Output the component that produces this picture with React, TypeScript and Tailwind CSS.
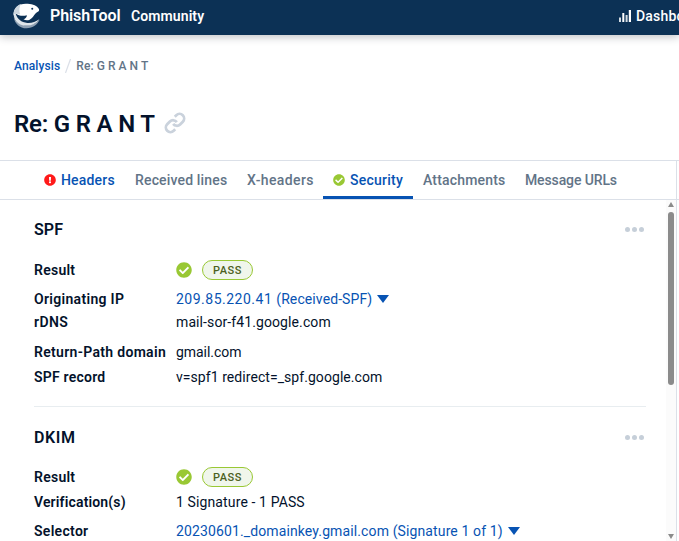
import type { ReactNode } from "react";
import { Link } from "lucide-react";
import { FaCheckCircle, FaExclamationCircle } from "react-icons/fa";

function Logo() {
  return (
    <svg viewBox="40 4 80 80" className="mt-px h-[27px] w-[27px] shrink-0">
      <path d="M42 46c3 19 18 33 38 33 19 0 33-11 39-26-9 10-22 17-38 17-18 0-33-9-39-24Z" fill="#8d9fb2" />
      <path d="M42 34c-1 20 13 37 38 37 16 0 30-7 38-19-11 8-23 12-36 11-17-1-30-12-34-27Z" fill="#dfe5ea" />
      <path d="M42 40C40 20 56 6 78 6c16 0 30 3 36 12 3 3 4 6 3 9-2 3-7 4-11 9-5 6-8 14-18 18-7 2-12 1-17-2 6-2 10-6 10-12-10 3-24 3-33-5Z" fill="#fff" />
      <path d="M42 38c-1-16 9-27 22-31-5 8-7 17-3 31-6-1-10-2-13-3Z" fill="#ccd5dd" />
      <circle cx="97" cy="21" r="3" fill="#0c3155" />
    </svg>
  );
}

function Bars() {
  return (
    <svg viewBox="0 0 12 12" className="h-3 w-3">
      <rect x="0" y="7.5" width="2" height="4.5" fill="#d3dbe2" />
      <rect x="3.3" y="3" width="2" height="9" fill="#fff" />
      <rect x="6.6" y="5" width="2" height="7" fill="#d3dbe2" />
      <rect x="9.8" y="0" width="2.2" height="12" fill="#fff" />
    </svg>
  );
}

function Caret() {
  return (
    <svg viewBox="0 0 12 8" className="ml-[5px] h-2 w-3">
      <path d="M0 0h12L6 8Z" fill="#0753b3" />
    </svg>
  );
}

function SectionHead({ children, className }: { children: ReactNode; className: string }) {
  return (
    <div className={`flex items-center justify-between pr-[2px] ${className}`}>
      <h2 className="text-base font-semibold">{children}</h2>
      <div className="flex gap-[2px]">
        <span className="size-[5px] rounded-full bg-[#c6cfd9]" />
        <span className="size-[5px] rounded-full bg-[#c6cfd9]" />
        <span className="size-[5px] rounded-full bg-[#c6cfd9]" />
      </div>
    </div>
  );
}

function Row({ label, children, className = "" }: { label: ReactNode; children: ReactNode; className?: string }) {
  return (
    <div className={`flex h-5 items-center ${className}`}>
      <div className="w-[142px] shrink-0 whitespace-nowrap font-semibold">{label}</div>
      <div className="flex items-center whitespace-nowrap">{children}</div>
    </div>
  );
}

function Pass() {
  return (
    <>
      <FaCheckCircle className="size-4 text-[#99c834]" />
      <span className="ml-[10px] flex h-5 w-[51px] items-center justify-center rounded-full border border-[#99c834] bg-[#f0f6eb] pt-[2px] text-[11px] font-medium tracking-[0.6px] text-[#4c611d]">
        PASS
      </span>
    </>
  );
}

export default function App() {
  return (
    <div className="flex h-[541px] w-[679px] flex-col overflow-hidden bg-white font-[Roboto,sans-serif] text-sm text-[#03122b]">
      <header className="flex h-[35px] shrink-0 items-center bg-[#0c3155] pb-1 pl-[13px] text-white shadow-[0_2px_8px_rgba(30,35,50,0.28)]">
        <Logo />
        <span className="ml-[10px] w-[81px] text-base font-semibold tracking-[-0.1px]">PhishTool</span>
        <span className="font-semibold tracking-[0.1px]">Community</span>
        <div className="ml-auto flex w-[60px] shrink-0 items-center gap-[5px] overflow-hidden whitespace-nowrap font-medium">
          <span className="shrink-0"><Bars /></span>
          <span className="tracking-[0.2px]">Dashboard</span>
        </div>
      </header>

      <nav className="mt-[21px] flex h-5 shrink-0 items-center pl-[14px] text-xs font-medium text-[#627487]">
        <span className="tracking-[0.12px] text-[#0753b3]">Analysis</span>
        <svg viewBox="0 0 6 14" className="mx-[5px] h-[14px] w-[6px]">
          <path d="M5.5 0L.5 14" stroke="#dbe0e8" strokeWidth="1.2" />
        </svg>
        <span className="tracking-[0.05px]">Re: G R A N T</span>
      </nav>

      <div className="mt-8 flex h-8 shrink-0 items-center pl-[14px]">
        <h1 className="w-[150px] whitespace-nowrap text-2xl font-semibold tracking-[-0.2px]">Re: G R A N T</h1>
        <Link size={22} strokeWidth={3} strokeLinecap="butt" className="-mt-[2px] shrink-0 text-[#cad2dc]" />
      </div>

      <div className="mt-5 flex h-10 shrink-0 border-y border-[#dbe0e8] font-medium text-[#627487]">
        <div className="flex w-[677px] items-center border-r border-[#dbe0e8] pl-11">
          <FaExclamationCircle className="size-3 text-[#ff1a1a]" />
          <span className="ml-[5px] w-[74px] tracking-[0.18px] text-[#0753b3]">Headers</span>
          <span className="w-[112px] tracking-[0.16px]">Received lines</span>
          <span className="w-[76px] tracking-[0.38px]">X-headers</span>
          <div className="flex h-full w-[90px] items-center border-b-[3px] border-[#0753b3] pl-[10px] pt-[3px] text-[#0753b3]">
            <FaCheckCircle className="size-3 text-[#99c834]" />
            <span className="ml-[5px] tracking-[0.25px]">Security</span>
          </div>
          <span className="ml-[10px] w-[102px] tracking-[0.17px]">Attachments</span>
          <span className="tracking-[-0.12px]">Message URLs</span>
        </div>
      </div>

      <div className="flex min-h-0 w-[677px] flex-1 border-r border-[#dbe0e8]">
        <main className="w-[646px] overflow-hidden pl-[34px]">
          <SectionHead className="h-[60px] pb-px tracking-[0.1px]">SPF</SectionHead>
          <Row label={<span className="tracking-[0.25px]">Result</span>}><Pass /></Row>
          <Row className="mt-[9px]" label={<span className="tracking-[0.31px]">Originating IP</span>}>
            <span className="text-[#0753b3]">
              <span className="tracking-[0.5px]">209.85.220.41 </span>
              <span className="tracking-[0.1px]">(Received-SPF)</span>
            </span>
            <Caret />
          </Row>
          <Row className="mt-[3px]" label={<span className="tracking-[0.4px]">rDNS</span>}>
            <span className="tracking-[0.1px]">mail-sor-f41.google.com</span>
          </Row>
          <Row className="mt-[10px]" label={<span className="tracking-[0.32px]">Return-Path domain</span>}>
            <span className="tracking-[-0.05px]">gmail.com</span>
          </Row>
          <Row className="mt-[5px]" label={<span className="tracking-[0.22px]">SPF record</span>}>
            <span className="tracking-[0.06px]">v=spf1 redirect=_spf.google.com</span>
          </Row>

          <div className="mt-[19px] h-px bg-[#e8edf0]" />
          <SectionHead className="h-[60px] pt-px tracking-[0.6px]">DKIM</SectionHead>
          <Row label={<span className="tracking-[0.25px]">Result</span>}><Pass /></Row>
          <Row className="mt-[5px]" label={<span className="tracking-[0.15px]">Verification(s)</span>}>
            <span className="tracking-[0.12px]">1 Signature - 1 PASS</span>
          </Row>
          <Row className="mt-[9px]" label={<span className="tracking-[0.3px]">Selector</span>}>
            <span className="tracking-[0.12px] text-[#0753b3]">20230601._domainkey.gmail.com (Signature 1 of 1)</span>
            <Caret />
          </Row>
        </main>
        <div className="ml-5 flex w-[10px] flex-col items-center bg-[#fbfbfb] pb-[2px] pt-[2px]">
          <svg viewBox="0 0 6 5" className="h-[5px] w-[6px] shrink-0"><path d="M3 0L6 5H0Z" fill="#8b8b8b" /></svg>
          <div className="mt-[5px] h-[173px] w-[6px] shrink-0 rounded-full bg-[#8b8b8b]" />
          <svg viewBox="0 0 6 5" className="mt-auto h-[5px] w-[6px] shrink-0"><path d="M0 0H6L3 5Z" fill="#8b8b8b" /></svg>
        </div>
      </div>
    </div>
  );
}
